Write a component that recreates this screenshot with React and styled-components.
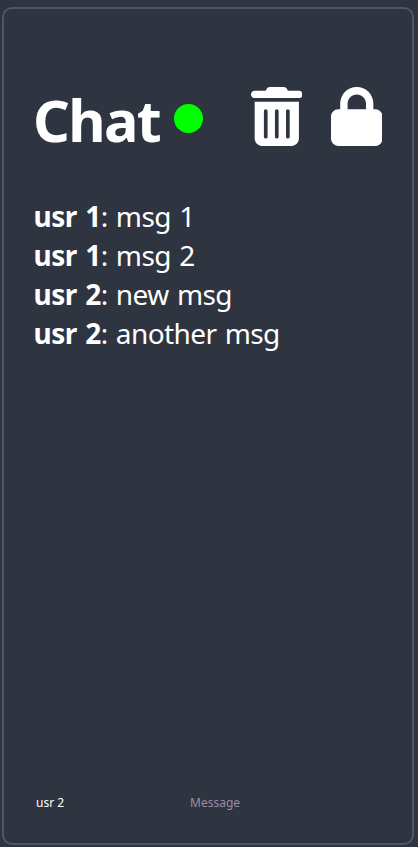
import React from "react";
import styled, { createGlobalStyle } from "styled-components";
import { FaTrashCan, FaLock } from "react-icons/fa6";

const Global = createGlobalStyle`
  * { box-sizing: border-box; }
  body { margin: 0; background: #2e3440; color: #fff; font-family: "Noto Sans", "Open Sans", sans-serif; }
`;
const Panel = styled.main`
  display: flex; flex-direction: column; height: 838px; margin: 7px 4px 2px 2px;
  padding: 78px 29px 0 29px; border: 2px solid #4c566a; border-radius: 10px;
`;
const Header = styled.header`display: flex; height: 61px;`;
const Title = styled.h1`
  margin: -1px 0 0; width: 141px; font-size: 57.5px; line-height: 68px; font-weight: 700;
  letter-spacing: -1.7px; white-space: nowrap;
`;
const Status = styled.span`width: 29px; height: 29px; margin-top: 17px; border-radius: 50%; background: #00ff00;`;
const Actions = styled.div`display: flex; gap: 28.4px; margin-left: 47.8px;`;
const IconButton = styled.button`
  display: flex; height: 59px; padding: 0; border: 0; background: none; color: #fff;
  svg { width: 51.6px; height: 59px; }
`;
const Messages = styled.ul`list-style: none; margin: 49px 0 0; padding: 0 0 0 0.5px; flex: 1;`;
const Message = styled.li`
  height: 39px; font-size: 28px; line-height: 39px; letter-spacing: -0.6px; word-spacing: 1.6px; white-space: nowrap;
`;
const Sender = styled.b`letter-spacing: -0.5px;`;
const Composer = styled.form`display: flex; height: 51px; padding-left: 1px;`;
const Field = styled.input`
  width: ${(p) => p.$width}; height: 20px; padding: 0 2px; border: 0; outline: 0; background: none; color: #fff;
  font: 12px "Noto Sans", sans-serif;
  &::placeholder { color: #9c8ca8; opacity: 1; }
`;
const messages = [["usr 1", "msg 1"], ["usr 1", "msg 2"], ["usr 2", "new msg"], ["usr 2", "another msg"]];

export default function App() {
  return (
    <>
      <Global />
      <Panel>
        <Header>
          <Title>Chat</Title>
          <Status />
          <Actions>
            <IconButton aria-label="Clear"><FaTrashCan /></IconButton>
            <IconButton aria-label="Lock"><FaLock /></IconButton>
          </Actions>
        </Header>
        <Messages>
          {messages.map(([user, text]) => <Message key={user + text}><Sender>{user}</Sender>: {text}</Message>)}
        </Messages>
        <Composer>
          <Field $width="154px" defaultValue="usr 2" />
          <Field $width="190px" placeholder="Message" />
        </Composer>
      </Panel>
    </>
  );
}
